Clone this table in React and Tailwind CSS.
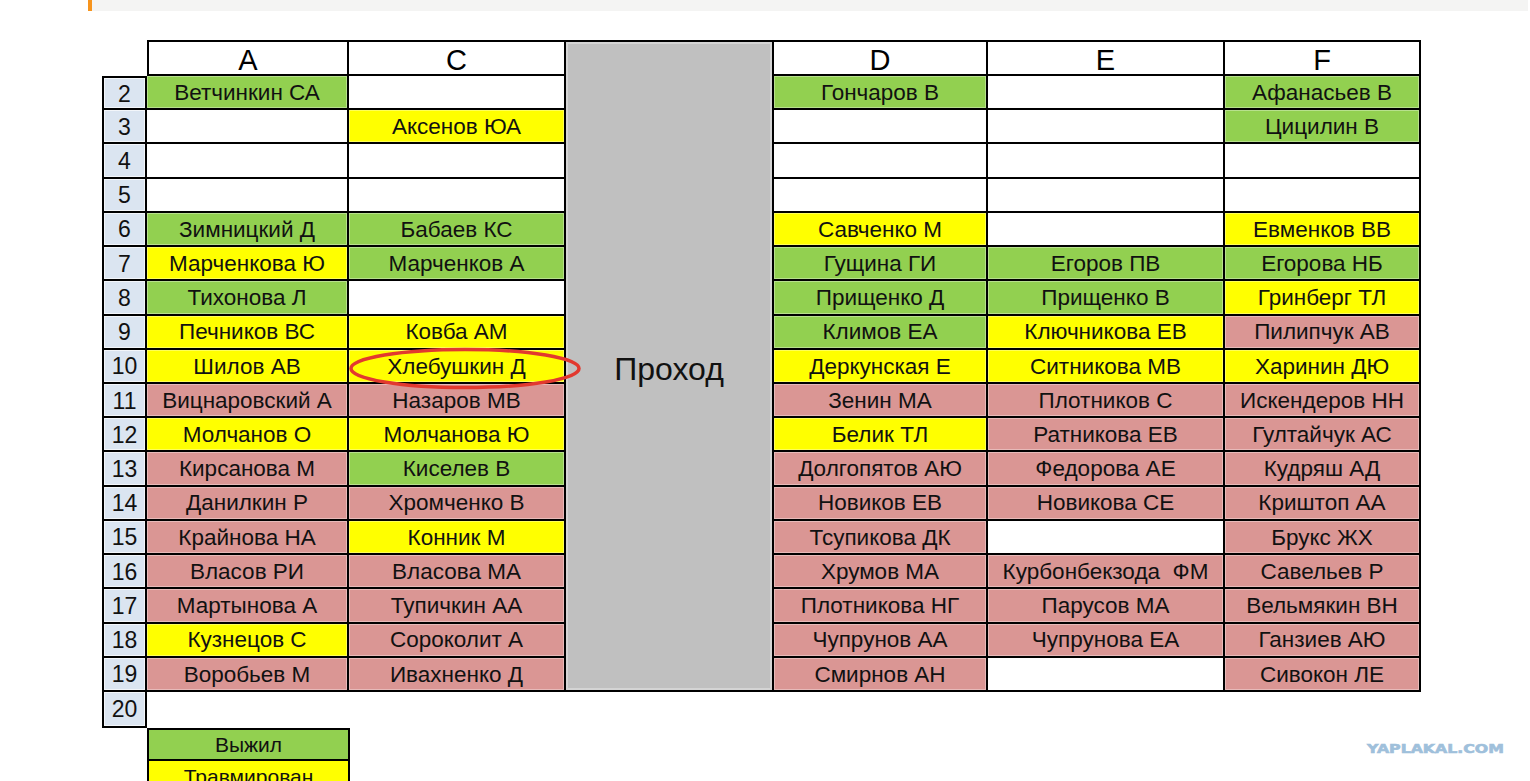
import React from "react";

const G = "g", Y = "y", P = "p", W = "w";

const rows = [
  [2, ["Ветчинкин СА", G], ["", W], ["Гончаров В", G], ["", W], ["Афанасьев В", G]],
  [3, ["", W], ["Аксенов ЮА", Y], ["", W], ["", W], ["Цицилин В", G]],
  [4, ["", W], ["", W], ["", W], ["", W], ["", W]],
  [5, ["", W], ["", W], ["", W], ["", W], ["", W]],
  [6, ["Зимницкий Д", G], ["Бабаев КС", G], ["Савченко М", Y], ["", W], ["Евменков ВВ", Y]],
  [7, ["Марченкова Ю", Y], ["Марченков А", G], ["Гущина ГИ", G], ["Егоров ПВ", G], ["Егорова НБ", G]],
  [8, ["Тихонова Л", G], ["", W], ["Прищенко Д", G], ["Прищенко В", G], ["Гринберг ТЛ", Y]],
  [9, ["Печников ВС", Y], ["Ковба АМ", Y], ["Климов ЕА", G], ["Ключникова ЕВ", Y], ["Пилипчук АВ", P]],
  [10, ["Шилов АВ", Y], ["Хлебушкин Д", Y, true], ["Деркунская Е", Y], ["Ситникова МВ", Y], ["Харинин ДЮ", Y]],
  [11, ["Вицнаровский А", P], ["Назаров МВ", P], ["Зенин МА", P], ["Плотников С", P], ["Искендеров НН", P]],
  [12, ["Молчанов О", Y], ["Молчанова Ю", Y], ["Белик ТЛ", Y], ["Ратникова ЕВ", P], ["Гултайчук АС", P]],
  [13, ["Кирсанова М", P], ["Киселев В", G], ["Долгопятов АЮ", P], ["Федорова АЕ", P], ["Кудряш АД", P]],
  [14, ["Данилкин Р", P], ["Хромченко В", P], ["Новиков ЕВ", P], ["Новикова СЕ", P], ["Криштоп АА", P]],
  [15, ["Крайнова НА", P], ["Конник М", Y], ["Тсупикова ДК", P], ["", W], ["Брукс ЖХ", P]],
  [16, ["Власов РИ", P], ["Власова МА", P], ["Хрумов МА", P], ["Курбонбекзода  ФМ", P], ["Савельев Р", P]],
  [17, ["Мартынова А", P], ["Тупичкин АА", P], ["Плотникова НГ", P], ["Парусов МА", P], ["Вельмякин ВН", P]],
  [18, ["Кузнецов С", Y], ["Сороколит А", P], ["Чупрунов АА", P], ["Чупрунова ЕА", P], ["Ганзиев АЮ", P]],
  [19, ["Воробьев М", P], ["Ивахненко Д", P], ["Смирнов АН", P], ["", W], ["Сивокон ЛЕ", P]],
];

function bgFor(c) {
  if (c === G) return "bg-[#92d050]";
  if (c === Y) return "bg-[#ffff00]";
  if (c === P) return "bg-[#da9694]";
  return "bg-white";
}

function Cell({ text, color, circled }) {
  return (
    <div
      className={
        "relative flex items-center justify-center border-r-2 border-b-2 border-black whitespace-pre text-[22.5px] leading-none text-[#111] shadow-[inset_0_0_0_1px_rgba(255,255,255,0.35)] " +
        bgFor(color)
      }
    >
      <span className="pt-[2px]">{text}</span>
      {circled && (
        <svg
          className="absolute left-0 top-[-3px] z-10 overflow-visible"
          width="233"
          height="43"
          viewBox="0 0 233 43"
        >
          <ellipse
            cx="116"
            cy="21.5"
            rx="114"
            ry="19"
            fill="none"
            stroke="#e2392f"
            strokeWidth="3.5"
          />
        </svg>
      )}
    </div>
  );
}

function NumCell({ n, first }) {
  return (
    <div
      className={
        "flex items-center justify-center border-l-2 border-r-2 border-b-2 border-black bg-[#dbe5f1] shadow-[inset_0_0_0_1px_#f3f6fa] text-[23px] leading-none text-[#111] " +
        (first ? "border-t-2" : "")
      }
    >
      <span className="pt-[2px]">{n}</span>
    </div>
  );
}

function Header({ letter, left }) {
  return (
    <div
      className={
        "flex items-center justify-center border-t-2 border-r-2 border-b-2 border-black bg-white text-[29px] leading-none text-black " +
        (left ? "border-l-2" : "")
      }
    >
      <span className="pt-[4px]">{letter}</span>
    </div>
  );
}

export default function App() {
  return (
    <div
      className="relative min-h-[781px] w-[1530px] bg-white"
      style={{ fontFamily: '"Liberation Sans", Arial, sans-serif' }}
    >
      <div className="ml-[88px] mr-[2px] h-[11px] border-l-4 border-[#f7941d] bg-[#f4f4f3]" />

      <div className="ml-[102px] mt-[29px] grid w-[1319px] grid-cols-[45px_202px_217px_208px_214px_237px_196px] grid-rows-[36px_repeat(18,34.22px)_36px]">
        <div />
        <Header letter="A" left />
        <Header letter="C" />
        <div className="row-[span_19/span_19] flex items-center justify-center border-t-2 border-r-2 border-b-2 border-black bg-[#c0c0c0] shadow-[inset_0_0_0_2px_#d4d4d4] text-[32px] leading-none text-[#111]">
          <span className="pt-[6px]">Проход</span>
        </div>
        <Header letter="D" />
        <Header letter="E" />
        <Header letter="F" />

        {rows.map((r, i) => (
          <React.Fragment key={r[0]}>
            <NumCell n={r[0]} first={i === 0} />
            {r.slice(1).map((c, j) => (
              <Cell key={j} text={c[0]} color={c[1]} circled={c[2]} />
            ))}
          </React.Fragment>
        ))}

        <NumCell n={20} />
      </div>

      <div className="ml-[147px] w-[203px]">
        <div className="flex h-[33px] items-center justify-center border-2 border-black bg-[#92d050] text-[21px] leading-none text-[#111]">
          Выжил
        </div>
        <div className="flex h-[33px] items-center justify-center border-x-2 border-b-2 border-black bg-[#ffff00] text-[21px] leading-none text-[#111]">
          Травмирован
        </div>
      </div>

      <div
        className="absolute left-[1367px] top-[744px] origin-left scale-x-[1.37] text-[11.5px] font-bold leading-none text-[#9fc0db] [-webkit-text-stroke:0.6px_#9fc0db]"
        style={{ fontFamily: '"DejaVu Sans", sans-serif' }}
      >
        YAPLAKAL.COM
      </div>
    </div>
  );
}
